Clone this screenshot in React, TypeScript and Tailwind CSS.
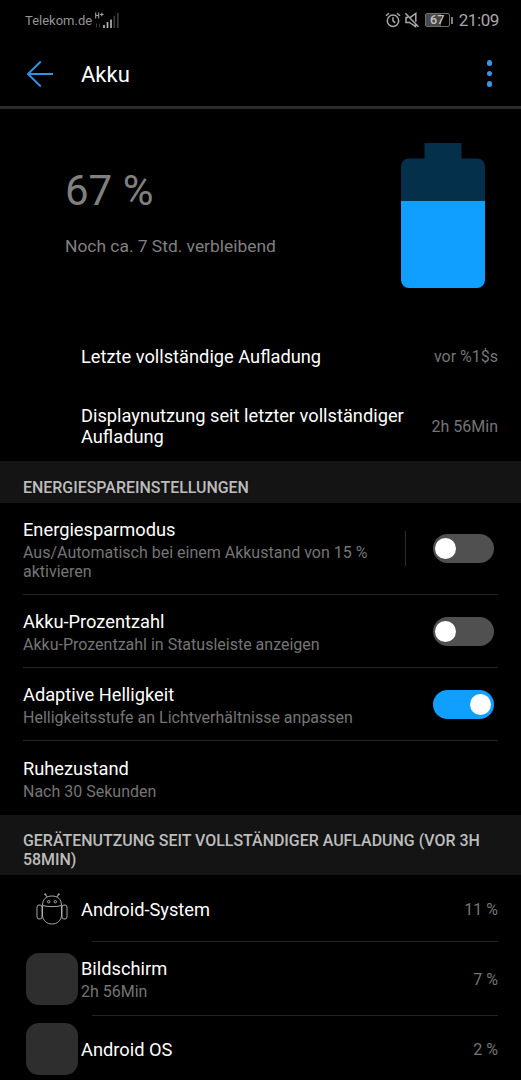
import clsx from "clsx";

type Setting = {
  title: string;
  summary: string;
  height: string;
  checked?: boolean;
  split?: boolean;
};

const settings: Setting[] = [
  {
    title: "Energiesparmodus",
    summary: "Aus/Automatisch bei einem Akkustand von 15 % aktivieren",
    height: "h-[92px]",
    checked: false,
    split: true,
  },
  {
    title: "Akku-Prozentzahl",
    summary: "Akku-Prozentzahl in Statusleiste anzeigen",
    height: "h-[73px]",
    checked: false,
  },
  {
    title: "Adaptive Helligkeit",
    summary: "Helligkeitsstufe an Lichtverhältnisse anpassen",
    height: "h-[73px]",
    checked: true,
  },
  { title: "Ruhezustand", summary: "Nach 30 Sekunden", height: "h-[74px] pb-px" },
];

const apps = [
  { name: "Android-System", percent: "11 %", height: "h-[67px]", android: true },
  { name: "Bildschirm", detail: "2h 56Min", percent: "7 %", height: "h-[74px]" },
  { name: "Android OS", percent: "2 %", height: "h-[66px]" },
];

function SignalIcon() {
  return (
    <svg className="ml-[3px] h-[18px] w-[25px]" viewBox="0 0 25 18" fill="none">
      <path d="M.7 1.500v6M3.700 1.500v6M.7 4.500h3M5 3.500h3.600M6.800 1.700v3.600" stroke="#a0a0a0" strokeWidth="1.100" />
      <path d="M1.500 12.500v4M4.500 12.500v4" stroke="#3c3c3c" strokeWidth="1" />
      <path d="M9 14v3M12.500 11v6M16 8.500V17" stroke="#b4b4b4" strokeWidth="1.700" />
      <path d="M19.300 5v12M22.800 2v15" stroke="#3c3c3c" strokeWidth="1.700" />
    </svg>
  );
}

function AlarmIcon() {
  return (
    <svg className="h-4 w-4" viewBox="0 0 16 16" fill="none" stroke="#a8a8a8" strokeWidth="1.500">
      <circle cx="8" cy="8.700" r="5.700" />
      <path d="M8 5.300v3.600l2.200 2M1 3.800l3-2.600M15 3.800l-3-2.600" />
    </svg>
  );
}

function MutedIcon() {
  return (
    <svg className="ml-[3px] h-4 w-4" viewBox="0 0 16 16" fill="none" stroke="#a8a8a8" strokeWidth="1.500">
      <path d="M1.300 1.200l13.200 13.600M6.300 5.300L11.800 1.500v8.300M4 5.500H2v5h3.500l6 4v-2.500" />
    </svg>
  );
}

function StatusBar() {
  return (
    <div className="flex h-10 items-center pr-[22px] pl-[25px] text-[#a8a8a8]">
      <span className="w-[67px] text-[13px] leading-none whitespace-nowrap text-[#949494]">Telekom.de</span>
      <SignalIcon />
      <div className="ml-auto flex items-center">
        <AlarmIcon />
        <MutedIcon />
        <div className="ml-[5px] flex h-[14px] w-[25px] items-center justify-center rounded-[2px] border border-[#6c6c6c] bg-linear-to-r from-[#484848] from-67% to-black to-67% text-[12.500px] leading-none font-medium text-[#c4c4c4]">
          67
        </div>
        <div className="ml-px h-[7px] w-[2px] bg-[#808080]" />
        <span className="ml-[6px] text-[17px] leading-none tracking-[-0.400px]">21:09</span>
      </div>
    </div>
  );
}

function AppBar() {
  return (
    <header className="flex h-[69px] items-center border-b-[3px] border-[#2b2b2b] pt-px pr-[29px] pl-[26px]">
      <svg className="h-7 w-7" viewBox="0 0 28 28" fill="none" stroke="#2f95e3" strokeWidth="1.900">
        <path d="M14.800 1.500L2 14l12.800 12.500M2 14h25" />
      </svg>
      <h1 className="ml-[27px] pt-px text-[22px] text-white">Akku</h1>
      <div className="ml-auto flex flex-col gap-[5px]">
        <i className="size-[5.500px] rounded-full bg-[#3399e6]" />
        <i className="size-[5.500px] rounded-full bg-[#3399e6]" />
        <i className="size-[5.500px] rounded-full bg-[#3399e6]" />
      </div>
    </header>
  );
}

function BatteryLevel() {
  return (
    <svg className="h-[145px] w-[84px]" viewBox="0 0 84 145">
      <path d="M23.500 0H60.500V15.500H76a8 8 0 0 1 8 8V58H0V23.500a8 8 0 0 1 8-8H23.500z" fill="#04304b" />
      <path d="M0 58H84V137a8 8 0 0 1-8 8H8a8 8 0 0 1-8-8z" fill="#109fff" />
    </svg>
  );
}

function Toggle({ checked }: { checked: boolean }) {
  return (
    <button
      role="switch"
      aria-checked={checked}
      className={clsx(
        "mr-[4.500px] flex h-[29px] w-[61px] shrink-0 items-center rounded-full px-[2.500px]",
        checked ? "justify-end bg-[#109fff]" : "bg-[#505050]",
      )}
    >
      <span className="size-[21px] rounded-full bg-white" />
    </button>
  );
}

function SectionTitle({ children, className }: { children: string; className: string }) {
  return (
    <h2 className={clsx("flex items-end bg-[#141414] px-[23px] text-[15.950px] leading-[19px] font-medium text-[#bdbdbd]", className)}>
      {children}
    </h2>
  );
}

function AndroidIcon() {
  return (
    <svg className="h-8 w-8" viewBox="0 0 32 32" fill="none" stroke="#b9b9b9" strokeWidth="0.900">
      <path d="M6.500 12.500C6.500 6 10.500 3 16 3s9.500 3 9.500 9.500C20 14 12 14 6.500 12.500z" />
      <path d="M6.500 12.500V22c0 5.500 4.500 9 9.500 9s9.500-3.500 9.500-9v-9.500" />
      <rect x="1" y="12" width="5" height="14" rx="2" />
      <rect x="26" y="12" width="5" height="14" rx="2" />
      <path d="M11 4L9.500 1.500M21 4l1.500-2.500" />
      <circle cx="9.300" cy="1.400" r="0.700" />
      <circle cx="22.700" cy="1.400" r="0.700" />
      <circle cx="12.700" cy="8.700" r="1.200" />
      <circle cx="19.300" cy="8.700" r="1.200" />
    </svg>
  );
}

export default function App() {
  return (
    <main className="h-[1080px] w-[521px] overflow-hidden bg-black font-['Roboto',sans-serif]">
      <StatusBar />
      <AppBar />

      <section className="flex h-[212px] items-start justify-between pt-[34px] pr-9 pl-[65px] text-[#808080]">
        <div>
          <p className="pt-6 text-[42px] leading-[48px]">67 %</p>
          <p className="mt-[21px] text-[17.400px] leading-5">Noch ca. 7 Std. verbleibend</p>
        </div>
        <BatteryLevel />
      </section>

      <section className="pr-[23px] pl-[81px] text-[16px] text-[#757575]">
        <div className="flex h-[71px] items-center justify-between pt-px">
          <p className="pb-[2px] text-[18.250px] leading-[21px] text-white">Letzte vollständige Aufladung</p>
          <span>vor %1$s</span>
        </div>
        <div className="flex h-[69px] items-center justify-between">
          <p className="w-[330px] pb-[2px] text-[18.250px] leading-[21px] text-white">
            Displaynutzung seit letzter vollständiger Aufladung
          </p>
          <span>2h 56Min</span>
        </div>
      </section>

      <SectionTitle className="h-[42px] pb-[6px]">ENERGIESPAREINSTELLUNGEN</SectionTitle>
      <ul className="px-[23px]">
        {settings.map(({ title, summary, height, checked, split }) => (
          <li key={title} className={clsx("flex items-center border-b border-[#242424] last:border-b-0", height)}>
            <div className="w-[360px] pt-[2px]">
              <p className="text-[18.250px] leading-[23px] text-white">{title}</p>
              <p className="mt-[2px] text-[16px] leading-[19px] text-[#757575]">{summary}</p>
            </div>
            <div className="ml-auto flex items-center">
              {split && <div className="mr-[27px] h-[35px] w-px bg-[#2c2c2c]" />}
              {checked !== undefined && <Toggle checked={checked} />}
            </div>
          </li>
        ))}
      </ul>

      <SectionTitle className="h-[60px] pb-[6px]">
        GERÄTENUTZUNG SEIT VOLLSTÄNDIGER AUFLADUNG (VOR 3H 58MIN)
      </SectionTitle>
      <ul className="pr-[23px] pl-[26px]">
        {apps.map(({ name, detail, percent, height, android }, i) => (
          <li key={name}>
            <div className={clsx("flex items-center", height)}>
              <div className={clsx("flex size-[52px] shrink-0 items-center justify-center", !android && "rounded-[13px] bg-[#2e2e2e]")}>
                {android && <AndroidIcon />}
              </div>
              <div className="ml-[3px] pt-px">
                <p className="text-[18.250px] leading-[23px] text-white">{name}</p>
                {detail && <p className="text-[16px] leading-[23px] text-[#757575]">{detail}</p>}
              </div>
              <span className="ml-auto pt-[2px] text-[16px] text-[#757575]">{percent}</span>
            </div>
            {i < apps.length - 1 && <hr className="-mt-px ml-[66px] border-[#242424]" />}
          </li>
        ))}
      </ul>
    </main>
  );
}
